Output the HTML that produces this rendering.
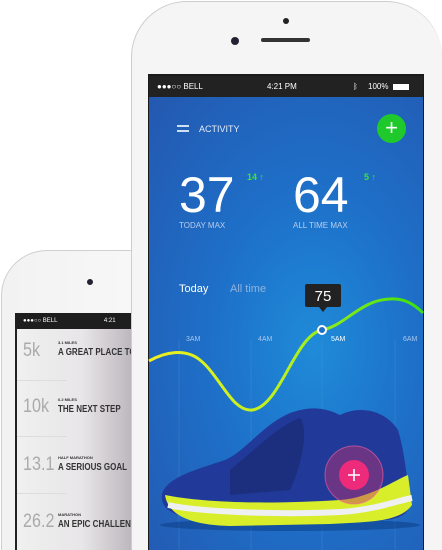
<!DOCTYPE html>
<html style="width:442px;height:550px;overflow:hidden"><head><style>
*{margin:0;padding:0;box-sizing:border-box}
body{width:442px;height:550px;overflow:hidden;background:#fff;position:relative;font-family:"Liberation Sans",sans-serif}
.abs{position:absolute}
</style></head><body>
<div class="abs" style="left:1px;top:250px;width:200px;height:300px;border-radius:46px 46px 0 0;background:linear-gradient(90deg,#f2f2f2,#fafafa);border:1.5px solid #cfcfcf;border-bottom:none"></div>
<div class="abs" style="left:87px;top:279px;width:6px;height:6px;border-radius:50%;background:#223"></div>
<div class="abs" style="left:15px;top:313px;width:120px;height:237px;background:linear-gradient(90deg,#f0f0f0 0%,#e8e6e8 55%,#b9b4ba 100%);border-left:2px solid #222"></div>
<div class="abs" style="left:15px;top:313px;width:120px;height:16px;background:#1e1e1e;color:#fff;font-size:6px;line-height:16px;padding-left:8px">●●●○○ BELL <span style="margin-left:45px">4:21</span></div>
<div class="abs" style="left:17px;top:380px;width:50px;height:1px;background:#ddd"></div>
<div class="abs" style="left:17px;top:436px;width:50px;height:1px;background:#ddd"></div>
<div class="abs" style="left:17px;top:493px;width:50px;height:1px;background:#ddd"></div>
<div class="abs" style="left:23px;top:340px;color:#aaa;font-size:19px;transform:scaleX(.85);transform-origin:left">5k</div>
<div class="abs" style="left:23px;top:396px;color:#aaa;font-size:19px;transform:scaleX(.85);transform-origin:left">10k</div>
<div class="abs" style="left:23px;top:454px;color:#aaa;font-size:19px;transform:scaleX(.85);transform-origin:left">13.1</div>
<div class="abs" style="left:23px;top:511px;color:#aaa;font-size:19px;transform:scaleX(.85);transform-origin:left">26.2</div>
<div class="abs" style="left:58px;top:340px;font-size:4px;color:#333;font-weight:bold">3.1 MILES</div>
<div class="abs" style="left:58px;top:347px;font-size:10px;color:#333;font-weight:bold;white-space:nowrap;transform:scaleX(.8);transform-origin:left">A GREAT PLACE TO S</div>
<div class="abs" style="left:58px;top:397px;font-size:4px;color:#333;font-weight:bold">6.2 MILES</div>
<div class="abs" style="left:58px;top:404px;font-size:10px;color:#333;font-weight:bold;white-space:nowrap;transform:scaleX(.8);transform-origin:left">THE NEXT STEP</div>
<div class="abs" style="left:58px;top:455px;font-size:4px;color:#333;font-weight:bold">HALF MARATHON</div>
<div class="abs" style="left:58px;top:462px;font-size:10px;color:#333;font-weight:bold;white-space:nowrap;transform:scaleX(.8);transform-origin:left">A SERIOUS GOAL</div>
<div class="abs" style="left:58px;top:512px;font-size:4px;color:#333;font-weight:bold">MARATHON</div>
<div class="abs" style="left:58px;top:519px;font-size:10px;color:#333;font-weight:bold;white-space:nowrap;transform:scaleX(.8);transform-origin:left">AN EPIC CHALLENGE</div>

<div class="abs" style="left:131px;top:1px;width:311px;height:549px;border-radius:56px 56px 0 0;background:#f5f5f5;border:1.5px solid #cdcdcd;border-bottom:none;border-right:none"></div>
<div class="abs" style="left:283px;top:18px;width:6px;height:6px;border-radius:50%;background:#222"></div>
<div class="abs" style="left:231px;top:37px;width:8px;height:8px;border-radius:50%;background:#223"></div>
<div class="abs" style="left:261px;top:38px;width:49px;height:4px;border-radius:2px;background:#333"></div>
<div class="abs" style="left:148px;top:74px;width:276px;height:476px;background:#1a1a1a"></div>
<div class="abs" style="left:149px;top:76px;width:274px;height:21px;background:#222;color:#fff;font-size:8px;line-height:21px">
<span class="abs" style="left:8px">●●●○○ BELL</span><span class="abs" style="left:118px">4:21 PM</span><span class="abs" style="left:204px">ᛒ</span><span class="abs" style="left:219px">100%</span><span class="abs" style="left:244px;top:8px;width:16px;height:6px;background:#fff"></span></div>
<div class="abs" style="left:149px;top:97px;width:274px;height:453px;background:radial-gradient(ellipse at 60% 55%,#1f8bd8 0%,#1e6fc8 45%,#2458b0 100%)"></div>
<div class="abs" style="left:177px;top:125px;width:12px;height:1.5px;background:#cfe0f5"></div>
<div class="abs" style="left:177px;top:130px;width:12px;height:1.5px;background:#cfe0f5"></div>
<div class="abs" style="left:199px;top:124px;color:#e6eefa;font-size:9px">ACTIVITY</div>
<div class="abs" style="left:377px;top:114px;width:29px;height:29px;border-radius:50%;background:#1fc92c;color:#fff;font-size:22px;line-height:27px;text-align:center">+</div>
<div class="abs" style="left:179px;top:170px;color:#fff;font-size:50px;line-height:50px">37</div>
<div class="abs" style="left:179px;top:221px;color:#b8cdea;font-size:8px">TODAY MAX</div>
<div class="abs" style="left:247px;top:172px;color:#3ee23a;font-size:9px;font-weight:bold">14 ↑</div>
<div class="abs" style="left:293px;top:170px;color:#fff;font-size:50px;line-height:50px">64</div>
<div class="abs" style="left:293px;top:221px;color:#b8cdea;font-size:8px">ALL TIME MAX</div>
<div class="abs" style="left:364px;top:172px;color:#3ee23a;font-size:9px;font-weight:bold">5 ↑</div>
<div class="abs" style="left:179px;top:283px;color:#fff;font-size:11px">Today</div>
<div class="abs" style="left:230px;top:283px;color:#8fb3e0;font-size:11px">All time</div>
<svg class="abs" style="left:0;top:0" width="442" height="550">
<defs><linearGradient id="g" x1="0" x2="1"><stop offset="0" stop-color="#f0f020"/><stop offset=".5" stop-color="#b8f020"/><stop offset="1" stop-color="#38e010"/></linearGradient></defs>
<g stroke="#5aa0e0" stroke-opacity=".35" stroke-width=".7"><line x1="179" y1="340" x2="179" y2="550"/><line x1="251" y1="340" x2="251" y2="550"/><line x1="322" y1="340" x2="322" y2="550"/><line x1="395" y1="340" x2="395" y2="550"/></g>
<g fill="#a8c6ec" font-size="7" font-family="Liberation Sans"><text x="186" y="341">3AM</text><text x="258" y="341">4AM</text><text x="331" y="341" fill="#fff">5AM</text><text x="403" y="341">6AM</text></g>
<path d="M149 361 C165 352 185 348 200 360 C220 376 232 412 252 410 C280 407 295 335 322 330 C345 326 360 300 390 299 C405 298 415 305 423 313" fill="none" stroke="url(#g)" stroke-width="3"/>
<circle cx="322" cy="330" r="4" fill="#1e6fc8" stroke="#fff" stroke-width="2"/>
<rect x="305" y="284" width="36" height="23" rx="2" fill="#222"/><path d="M319 307 L323 312 L327 307Z" fill="#222"/>
<text x="323" y="301" fill="#fff" font-size="15" text-anchor="middle" font-family="Liberation Sans">75</text>
<ellipse cx="290" cy="525" rx="130" ry="6" fill="#0a3a80" opacity=".5"/>
<path d="M162 495 C165 478 195 470 225 460 C245 452 262 425 290 413 C305 408 320 405 340 415 C360 405 385 410 398 430 C404 450 406 470 410 500 C412 515 395 522 370 520 L215 520 C180 519 160 512 162 495Z" fill="#213a9a"/>
<path d="M230 470 C260 445 280 425 300 418 C310 430 300 470 290 490 L230 495Z" fill="#1b2f7e"/>
<path d="M165 495 C200 502 260 505 340 500 C370 498 395 480 408 475 L412 505 C400 522 370 522 330 524 L230 526 C190 525 168 515 165 495Z" fill="#d8ee2a"/>
<path d="M168 505 C200 512 280 515 340 512 C375 510 400 500 412 498" stroke="#eef0f2" stroke-width="6" fill="none"/>
<circle cx="354" cy="475" r="29" fill="#c0306a" opacity=".45"/>
<circle cx="354" cy="475" r="29" fill="none" stroke="#ff5fa0" stroke-opacity=".6" stroke-width="1"/>
<circle cx="354" cy="475" r="15" fill="#ee2a7b"/>
<path d="M348 475 H360 M354 469 V481" stroke="#fff" stroke-width="1.6"/>
</svg>
</body></html>
